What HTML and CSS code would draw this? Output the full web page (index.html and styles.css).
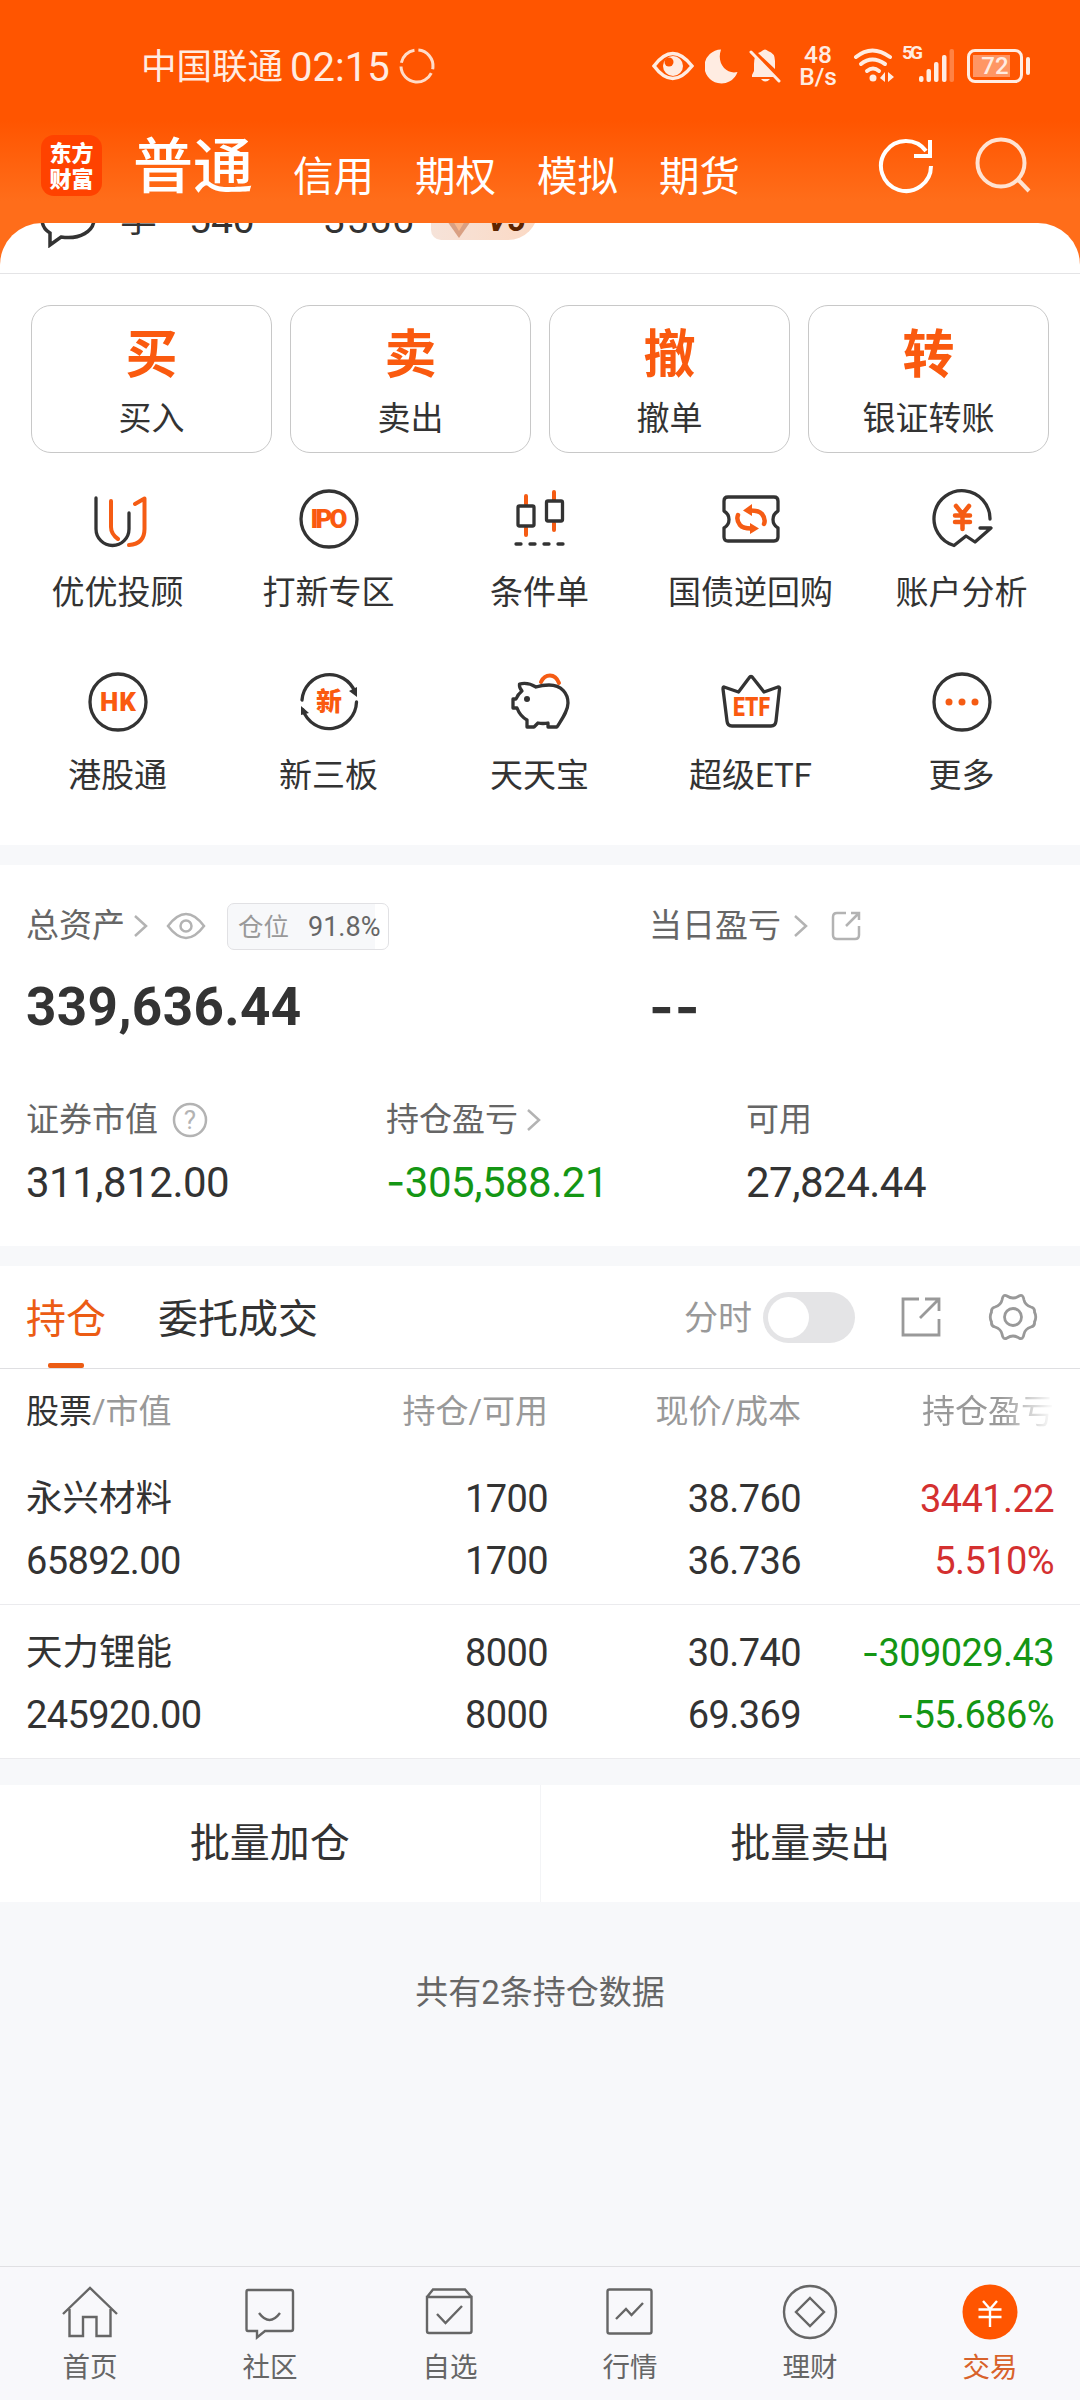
FILE: index.html
```html
<!DOCTYPE html>
<html lang="zh-CN">

<head>
    <meta charset="UTF-8">
    <meta name="viewport" content="width=device-width, initial-scale=1.0">
    <title>交易</title>
    <link rel="stylesheet" href="styles.css">
</head>

<body>

    <header class="header">
        <div class="status">
            <span class="carrier">中国联通</span>
            <span class="clock">02:15</span>
            <svg class="ring" width="38" height="38" viewBox="0 0 38 38">
                <circle cx="19" cy="19" r="16" pathLength="100" stroke-dasharray="27 4 42 4 19 4" transform="rotate(-85 19 19)" />
            </svg>
            <div class="status-right">
                <svg width="42" height="36" viewBox="0 0 42 36">
                    <path d="M2 18Q20.500-7 40 18Q20.500 43 2 18z" fill="none" stroke="#ffece2" stroke-width="3.500" />
                    <circle cx="21" cy="18" r="10" />
                    <circle cx="17" cy="14" r="4.500" fill="#ff5500" />
                </svg>
                <svg class="moon" width="34" height="36" viewBox="0 0 34 36">
                    <path d="M16 1.500A17 17 0 1 0 32.500 24C22 27 11 16 16 1.500z" />
                </svg>
                <svg class="bell" width="36" height="36" viewBox="0 0 36 36">
                    <path d="M5 27V29H28L8 9Q7 12 7 16V23z" />
                    <path d="M11 5Q14 4 15 3Q18 0 21 3Q28 5 28 13V21z" />
                    <path d="M14 31h9q-4.500 5-9 0z" />
                    <path d="M4 4L32 33" stroke="#ffece2" stroke-width="3" stroke-linecap="round" />
                </svg>
                <div class="speed"><span>48</span><span>B/s</span></div>
                <svg class="wifi" width="44" height="38" viewBox="0 0 44 38">
                    <g fill="none" stroke="#ffece2" stroke-width="4" stroke-linecap="round">
                        <path d="M4 10Q20-3 38 10" />
                        <path d="M9 17Q20 8 33 17" />
                        <path d="M15 24Q21 19 27 24" />
                    </g>
                    <circle cx="21" cy="31" r="3.500" />
                    <path d="M28 31L33 25V35zM36 25V35L42 30z" />
                </svg>
                <span class="net">5G</span>
                <svg class="signal" width="36" height="38" viewBox="0 0 36 38">
                    <rect x="0" y="29" width="4.500" height="6" rx="2" />
                    <rect x="7.500" y="22" width="4.500" height="13" rx="2" />
                    <rect x="15" y="15" width="4.500" height="20" rx="2" />
                    <rect x="23" y="8" width="4.500" height="27" rx="2" />
                    <rect x="30.500" y="2" width="4.500" height="33" rx="2" opacity=".3" />
                </svg>
                <div class="battery"><span>72</span></div>
                <i class="nub"></i>
            </div>
        </div>

        <div class="titlebar">
            <div class="logo">东方<br>财富</div>
            <h1>普通</h1>
            <nav class="accounts">
                <a>信用</a>
                <a>期权</a>
                <a>模拟</a>
                <a>期货</a>
            </nav>
            <svg class="refresh" width="60" height="60" viewBox="0 0 60 60">
                <path d="M55 31A25 25 0 1 1 50 16" />
                <path d="M54 5V21H38" />
            </svg>
            <svg class="search" width="60" height="60" viewBox="0 0 60 60">
                <circle cx="28" cy="28" r="23.500" />
                <path d="M44.500 44L56 56" />
            </svg>
        </div>
    </header>

    <div class="sheet">
        <div class="profile">
            <svg width="56" height="50" viewBox="0 0 56 50">
                <path d="M28 4C12 4 2 12 2 21C2 28 5 32 10 35V47L21 39C40 42 54 33 54 21C54 12 44 4 28 4z" />
            </svg>
            <span class="surname">李</span>
            <span class="no1">540</span>
            <span class="no2">3566</span>
            <div class="level">
                <svg width="28" height="26" viewBox="0 0 28 26">
                    <path d="M2 8L26 8L14 25z" fill="#d9a083" />
                    <path d="M8 8H20L14 18z" fill="#f7b88e" />
                </svg>
                <b>V5</b>
            </div>
        </div>

        <section class="quick">
            <div class="trade">
                <div class="card"><b>买</b><span>买入</span></div>
                <div class="card"><b>卖</b><span>卖出</span></div>
                <div class="card"><b>撤</b><span>撤单</span></div>
                <div class="card"><b>转</b><span>银证转账</span></div>
            </div>

            <div class="menu">
                <div class="item">
                    <svg class="ico" viewBox="0 0 64 64">
                        <path d="M10 11V42a16.500 16.500 0 0 0 33 0V26" />
                        <path class="o" d="M25 14V40q0 7 7 12M49 17L58.500 11.500V42q0 15-15.500 16" />
                    </svg>
                    <span>优优投顾</span>
                </div>
                <div class="item">
                    <svg class="ico" viewBox="0 0 64 64">
                        <circle cx="32" cy="32" r="28" />
                        <text x="32" y="41" textLength="37">IPO</text>
                    </svg>
                    <span>打新专区</span>
                </div>
                <div class="item">
                    <svg class="ico" viewBox="0 0 64 64">
                        <path class="o" d="M18 9V17M18 41V48M46 5V13M46 36V43" />
                        <rect x="10" y="19" width="16" height="20" rx="1.500" />
                        <rect x="38.500" y="14" width="16" height="20" rx="1.500" />
                        <path d="M8 57h5M22 57h5M36 57h5M50 57h5" />
                    </svg>
                    <span>条件单</span>
                </div>
                <div class="item">
                    <svg class="ico" viewBox="0 0 64 64">
                        <path d="M9 10H55Q59 10 59 14V24Q54 27 54 32.500T59 41V50Q59 54 55 54H9Q5 54 5 50V41Q10 38 10 32.500T5 24V14Q5 10 9 10z" />
                        <path class="o arr" d="M19 28Q17 33 21 38Q24 41.500 32 41.500M45 37Q47 32 43 27Q40 23.500 32 23.500" />
                        <path class="dot" d="M24 23.500L33 17V29zM40 41.500L31 36V47z" />
                    </svg>
                    <span>国债逆回购</span>
                </div>
                <div class="item">
                    <svg class="ico" viewBox="0 0 64 64">
                        <path d="M60 32A28 28 0 1 0 24 58.500L36 49L45 55L61 41H50" />
                        <path class="o arr" d="M26 19L32.500 27L39 19M32.500 27V42M25 28.500H40M25 35H40" />
                    </svg>
                    <span>账户分析</span>
                </div>
                <div class="item">
                    <svg class="ico" viewBox="0 0 64 64">
                        <circle cx="32" cy="32" r="28" />
                        <text x="32" y="41" textLength="36">HK</text>
                    </svg>
                    <span>港股通</span>
                </div>
                <div class="item">
                    <svg class="ico" viewBox="0 0 64 64">
                        <path d="M5 30A27.500 27.500 0 0 1 58 22M59.500 32A27.500 27.500 0 0 1 6 40" />
                        <path class="tip" d="M52 21L60 17V27zM4 36L12 43L4 45z" />
                        <text x="32" y="41" textLength="26">新</text>
                    </svg>
                    <span>新三板</span>
                </div>
                <div class="item">
                    <svg class="ico" viewBox="0 0 64 64">
                        <path class="o" d="M33 12Q36 5.500 42 5.500T51 13" />
                        <path d="M11.500 14Q20 12 28 17Q34 15 41 15C54 15 60 24 60 33C60 41 54 49 49 57H40V53Q35 54 30 53L26 57H19V50Q12 46 9 38H5V29H8Q10 24 14 21Q11 18 11.500 14z" />
                        <circle class="eye" cx="19" cy="29" r="3" />
                    </svg>
                    <span>天天宝</span>
                </div>
                <div class="item">
                    <svg class="ico" viewBox="0 0 64 64">
                        <path d="M5 17L19.500 22L30 8Q32 5 34 8L45 22L59 17Q61 17 60.500 19L57 51Q56.500 56 52 56H13Q8.500 56 8 51L4 19Q4 17 5 17z" />
                        <text x="32.500" y="46" textLength="37" lengthAdjust="spacingAndGlyphs">ETF</text>
                    </svg>
                    <span>超级ETF</span>
                </div>
                <div class="item">
                    <svg class="ico" viewBox="0 0 64 64">
                        <circle cx="32" cy="32" r="28" />
                        <g class="dot">
                            <circle cx="19" cy="32" r="3.500" />
                            <circle cx="32" cy="32" r="3.500" />
                            <circle cx="45" cy="32" r="3.500" />
                        </g>
                    </svg>
                    <span>更多</span>
                </div>
            </div>
        </section>
    </div>

    <section class="assets">
        <div class="totals">
            <div class="total">
                <div class="label">
                    总资产
                    <svg class="line chev" width="16" height="24" viewBox="0 0 16 24"><path d="M2 2L13 12L2 22" /></svg>
                    <svg class="line watch" width="40" height="30" viewBox="0 0 40 30">
                        <path d="M2 15Q20-9 38 15Q20 39 2 15z" />
                        <circle cx="20" cy="15" r="5.500" />
                    </svg>
                    <span class="ratio"><em>仓位</em>91.8%</span>
                </div>
                <div class="big">339,636.44</div>
            </div>
            <div class="today">
                <div class="label">
                    当日盈亏
                    <svg class="line chev wide" width="16" height="24" viewBox="0 0 16 24"><path d="M2 2L13 12L2 22" /></svg>
                    <svg class="line export" width="32" height="32" viewBox="0 0 32 32">
                        <path d="M16 3H7Q3 3 3 7V25Q3 29 7 29H25Q29 29 29 25V16M21 3H29V10M28 4L16 16" />
                    </svg>
                </div>
                <div class="big dash">--</div>
            </div>
        </div>
        <div class="details">
            <div>
                <div class="label">
                    证券市值
                    <svg class="line help" width="36" height="36" viewBox="0 0 36 36">
                        <circle cx="18" cy="18" r="16" />
                        <text x="18" y="27">?</text>
                    </svg>
                </div>
                <div class="num">311,812.00</div>
            </div>
            <div>
                <div class="label">
                    持仓盈亏
                    <svg class="line chev" width="16" height="24" viewBox="0 0 16 24"><path d="M2 2L13 12L2 22" /></svg>
                </div>
                <div class="num green"><i>-</i>305,588.21</div>
            </div>
            <div>
                <div class="label">可用</div>
                <div class="num">27,824.44</div>
            </div>
        </div>
    </section>

    <section class="positions">
        <div class="tabs">
            <a class="tab active">持仓</a>
            <a class="tab">委托成交</a>
            <div class="tools">
                <span>分时</span>
                <div class="switch"></div>
                <svg class="out" width="42" height="42" viewBox="0 0 42 42">
                    <path d="M19 3H3V39H39V23M25 3H39V15M38 4L20 22" />
                </svg>
                <svg class="gear" width="50" height="50" viewBox="0 0 50 50">
                    <path d="M14 8Q15 1.500 19 4Q25 8 31 4Q35 1.500 36 8Q37 13 43 15Q47 16 46.500 20Q49 25 46.500 30Q47 34 43 35Q37 37 36 42Q35 48.500 31 46Q25 42 19 46Q15 48.500 14 42Q13 37 7 35Q3 34 3.500 30Q1 25 3.500 20Q3 16 7 15Q13 13 14 8z" />
                    <circle cx="25" cy="25" r="8.500" />
                </svg>
            </div>
        </div>

        <div class="row head">
            <div><b>股票</b>/市值</div>
            <div>持仓/可用</div>
            <div>现价/成本</div>
            <div class="fade">持仓盈亏</div>
        </div>
        <div class="row">
            <div><p class="name">永兴材料</p><p>65892.00</p></div>
            <div><p>1700</p><p>1700</p></div>
            <div><p>38.760</p><p>36.736</p></div>
            <div class="red"><p>3441.22</p><p>5.510%</p></div>
        </div>
        <div class="row">
            <div><p class="name">天力锂能</p><p>245920.00</p></div>
            <div><p>8000</p><p>8000</p></div>
            <div><p>30.740</p><p>69.369</p></div>
            <div class="green"><p><i>-</i>309029.43</p><p><i>-</i>55.686%</p></div>
        </div>
    </section>

    <div class="batch">
        <a>批量加仓</a>
        <a>批量卖出</a>
    </div>

    <p class="summary">共有2条持仓数据</p>

    <footer class="tabbar">
        <a>
            <svg viewBox="0 0 64 64"><path d="M5 34L32 8L59 34M11.500 29V56H25V37H38.500V56H52.500V29" /></svg>
            首页
        </a>
        <a>
            <svg viewBox="0 0 64 64"><path d="M10 10H53Q55 10 55 12V49Q55 51 53 51H27L19 57.500V51H10Q8.500 51 8.500 49V12Q8.500 10 10 10zM21 33Q31.500 47 42 33" /></svg>
            社区
        </a>
        <a>
            <svg viewBox="0 0 64 64"><path d="M9 17H53.500V51Q53.500 53 51.500 53H11Q9 53 9 51zL15 9.500H47L53.500 17M19 34L27.500 43L44 26" /></svg>
            自选
        </a>
        <a>
            <svg viewBox="0 0 64 64">
                <rect x="9.500" y="9.500" width="44" height="44" rx="2" />
                <path d="M18 39L28 29L33.500 35L45 23" />
            </svg>
            行情
        </a>
        <a>
            <svg viewBox="0 0 64 64">
                <circle cx="32" cy="32" r="26" />
                <path d="M32 18L46 32L32 46L18 32z" />
            </svg>
            理财
        </a>
        <a class="on">
            <svg viewBox="0 0 64 64">
                <circle cx="32" cy="32" r="27.500" />
                <path d="M25 21L32 29L39 21M32 29V47M20.500 29.500H43.500M20.500 37H43.500" />
            </svg>
            交易
        </a>
    </footer>

</body>

</html>
```
FILE: styles.css
```css
* {
    box-sizing: border-box;
}

body {
    margin: 0;
    min-height: 2400px;
    display: flex;
    flex-direction: column;
    background: #f7f8fa;
    color: #333;
    font-family: Roboto, "Noto Sans CJK SC", sans-serif;
    font-size: 33px;
    font-weight: 400;
}

p,
h1 {
    margin: 0;
}

svg {
    flex: none;
    fill: none;
}

/* header */

.header {
    height: 223px;
    background: linear-gradient(#ff5500 54%, #ff6d1a 90%);
    color: #fff;
}

.status {
    height: 130px;
    padding: 2px 50px 0 141px;
    display: flex;
    align-items: center;
    color: #ffece2;
    line-height: 40px;
}

.carrier {
    padding-top: 2px;
    font-size: 35.5px;
}

.clock {
    margin-left: 7px;
    padding-top: 3px;
    font-size: 40px;
}

.ring {
    margin-left: 8px;
    stroke: #ffdcc8;
    stroke-width: 3;
}

.status-right {
    margin-left: auto;
    display: flex;
    align-items: center;
}

.status-right svg {
    fill: #ffece2;
}

.moon {
    margin-left: 11px;
}

.bell {
    margin-left: 8px;
}

.speed {
    width: 40px;
    margin-left: 15px;
    display: flex;
    flex-direction: column;
    align-items: center;
    font-size: 24.5px;
    font-weight: 500;
    line-height: 22px;
}

.wifi {
    margin-left: 14px;
}

.net {
    width: 17px;
    margin: 0 0 26px 6px;
    font-size: 19px;
    font-weight: 700;
    line-height: 18px;
    letter-spacing: -3px;
}

.signal {
    margin-left: 0;
}

.battery {
    width: 56px;
    height: 34px;
    margin-left: 12px;
    border: 3px solid #ffece2;
    border-radius: 8px;
    background: linear-gradient(90deg, #ff9664 37px, transparent 37px) 3px 3px / 44px 22px no-repeat;
    font-size: 24px;
    font-weight: 500;
    line-height: 29px;
    text-align: center;
}

.nub {
    width: 4px;
    height: 18px;
    margin-left: 3px;
    border-radius: 2px;
    background: #ffece2;
}

.titlebar {
    height: 70px;
    padding: 0 49px 0 41px;
    display: flex;
    align-items: center;
}

.logo {
    width: 61px;
    height: 61px;
    border-radius: 13px;
    background: #ff4200;
    font-family: "Noto Sans CJK SC", sans-serif;
    font-size: 22px;
    font-weight: 900;
    line-height: 26px;
    text-align: center;
    padding-top: 3px;
}

.titlebar h1 {
    margin-left: 31px;
    padding-top: 5px;
    font-size: 60px;
    font-weight: 500;
    line-height: 70px;
}

.accounts {
    margin: 23px auto 0 40px;
    display: flex;
    gap: 41px;
    font-size: 40.5px;
    line-height: 50px;
}

.refresh {
    margin-right: 37px;
    stroke: #fff;
    stroke-width: 4;
}

.search {
    stroke: #ffe3d2;
    stroke-width: 4;
    margin-right: -2px;
}

/* account strip, scrolled half under the header */

.sheet {
    background: #ff6d1a;
}

.profile {
    height: 51px;
    padding: 0 40px;
    display: flex;
    align-items: flex-start;
    overflow: hidden;
    border-bottom: 1px solid #e4e4e6;
    border-radius: 42px 42px 0 0;
    background: #fff;
    font-size: 39px;
    line-height: 44px;
}

.profile svg {
    margin-top: -25px;
    stroke: #333;
    stroke-width: 3.5;
}

.profile span {
    margin-top: -25px;
}

.surname {
    margin-left: 24px;
    font-size: 37px;
}

.no1 {
    margin-left: 32px;
}

.no2 {
    margin-left: 69px;
    letter-spacing: 0.8px;
}

.level {
    height: 40px;
    width: 107px;
    margin: -23px 0 0 16px;
    padding-left: 14px;
    display: flex;
    border-radius: 10px 0 30px 10px;
    background: linear-gradient(90deg, #f6e3d9, #fbd9c4);
    color: #5c2400;
    font-size: 33px;
    font-style: italic;
    line-height: 40px;
}

.level svg {
    margin: 13px 14px 0 0;
    stroke: none;
}

/* shortcuts */

.quick {
    height: 571px;
    padding-top: 31px;
    background: #fff;
}

.trade {
    padding: 0 31px;
    display: grid;
    grid-template-columns: repeat(4, 1fr);
    gap: 18px;
}

.card {
    height: 148px;
    padding-top: 20px;
    display: flex;
    flex-direction: column;
    align-items: center;
    border: 1px solid #c8c8c8;
    border-radius: 20px;
}

.card b {
    color: #fa5a0f;
    font-size: 52px;
    font-weight: 700;
    line-height: 60px;
}

.card span {
    margin-top: 13px;
    line-height: 40px;
}

.menu {
    margin: 34px 13px 0 12px;
    display: grid;
    grid-template-columns: repeat(5, 1fr);
    row-gap: 57px;
}

.item {
    display: flex;
    flex-direction: column;
    align-items: center;
    gap: 22px;
    line-height: 40px;
    white-space: nowrap;
}

.ico {
    width: 64px;
    height: 64px;
    stroke: #333;
    stroke-width: 3.3;
    stroke-linecap: round;
    stroke-linejoin: round;
}

.ico .o {
    stroke: #f55c14;
    stroke-width: 4;
}

.ico .arr {
    stroke-width: 4.5;
}

.ico .dot {
    fill: #f55c14;
    stroke: none;
}

.ico .tip,
.ico .eye {
    fill: #333;
    stroke: none;
}

.ico text {
    fill: #fa5a0f;
    stroke: none;
    font-size: 26px;
    font-weight: 900;
    text-anchor: middle;
}

/* assets */

.assets {
    height: 381px;
    margin-top: 20px;
    padding: 38px 0 0 26px;
    background: #fff;
}

.totals {
    display: flex;
}

.total {
    width: 623px;
}

.label {
    height: 46px;
    display: flex;
    align-items: center;
    color: #666;
    line-height: 46px;
}

.line {
    stroke: #b3b3b3;
    stroke-width: 2.5;
}

.chev {
    margin-left: 8px;
}

.chev.wide {
    margin-left: 12px;
}

.watch {
    margin-left: 17px;
}

.ratio {
    width: 162px;
    height: 47px;
    margin-left: 21px;
    padding-left: 10px;
    border: 1px solid #e1e1e4;
    border-radius: 7px;
    background: linear-gradient(90deg, #f7f8fa 91.8%, #fff 91.8%);
    font-size: 27px;
    line-height: 46px;
    white-space: nowrap;
}

.ratio em {
    margin-right: 19px;
    color: #999;
    font-size: 25.5px;
    font-style: normal;
}

.export {
    margin-left: 21px;
}

.help {
    margin-left: 14px;
}

.help text {
    fill: #b3b3b3;
    stroke: none;
    font-size: 26px;
    text-anchor: middle;
}

.big {
    margin-top: 28px;
    font-size: 53px;
    font-weight: 700;
    line-height: 60px;
    letter-spacing: 0.4px;
}

.dash {
    font-family: Inter, sans-serif;
    letter-spacing: 1px;
}

.details {
    margin-top: 60px;
    display: flex;
}

.details > div {
    flex: none;
    width: 360px;
}

.details > div:last-child {
    width: 300px;
}

.num {
    margin-top: 15px;
    font-size: 42px;
    line-height: 50px;
    letter-spacing: -0.5px;
}

.num i,
.row i {
    font-family: Inter, sans-serif;
    font-style: normal;
    line-height: 1;
}

.green {
    color: #149614;
}

.red {
    color: #d43030;
}

/* positions */

.positions {
    margin-top: 20px;
    background: #fff;
}

.tabs {
    height: 103px;
    padding: 0 42px 0 26px;
    display: flex;
    border-bottom: 1px solid #dfdfe2;
    font-size: 40px;
    line-height: 108px;
}

.tab {
    height: 102px;
    margin-right: 52px;
}

.active {
    display: flex;
    flex-direction: column;
    align-items: center;
    justify-content: space-between;
    color: #ec5c14;
}

.active::after {
    content: "";
    width: 36px;
    height: 5px;
    margin-top: -12px;
    border-radius: 2px;
    background: #ec5c14;
}

.tools {
    height: 102px;
    margin-left: auto;
    display: flex;
    align-items: center;
    color: #999;
    font-size: 34px;
}

.tools span {
    line-height: 50px;
    padding-top: 2px;
}

.switch {
    width: 92px;
    height: 51px;
    margin-left: 11px;
    padding: 5px;
    border-radius: 26px;
    background: #e4e4e6;
}

.switch::before {
    content: "";
    display: block;
    width: 41px;
    height: 41px;
    border-radius: 50%;
    background: #fff;
}

.out,
.gear {
    stroke: #999;
    stroke-width: 2.8;
}

.out {
    margin-left: 45px;
}

.gear {
    margin-left: 46px;
}

.row {
    height: 154px;
    padding: 23px 26px 0 26px;
    display: grid;
    grid-template-columns: 269px 253px 253px 1fr;
    border-bottom: 1px solid #ebebee;
    font-size: 38px;
    line-height: 50px;
    letter-spacing: -0.6px;
    text-align: right;
}

.row > div:first-child {
    text-align: left;
}

.row p {
    height: 50px;
}

.row p + p {
    margin-top: 12px;
}

.row .name {
    font-size: 36.5px;
    letter-spacing: 0;
}

.head {
    height: 82px;
    padding-top: 18px;
    border: none;
    color: #999;
    font-size: 33px;
    letter-spacing: 0;
}

.head b {
    color: #333;
    font-weight: 400;
}

.fade {
    -webkit-mask-image: linear-gradient(90deg, #000 200px, transparent 253px);
    mask-image: linear-gradient(90deg, #000 200px, transparent 253px);
}

.batch {
    height: 117px;
    margin-top: 26px;
    display: flex;
    align-items: center;
    background: #fff;
    font-size: 40px;
    line-height: 117px;
    text-align: center;
}

.batch a {
    flex: 1;
}

.batch a + a {
    border-left: 1px solid #f3f4f6;
}

.summary {
    margin-top: 66px;
    color: #666;
    line-height: 50px;
    text-align: center;
}

/* bottom bar */

.tabbar {
    height: 134px;
    margin-top: auto;
    padding-top: 13px;
    display: flex;
    border-top: 1px solid #e0e0e3;
    background: #f8f8fb;
    color: #666;
    font-size: 27.5px;
    line-height: 40px;
}

.tabbar a {
    flex: 1;
    display: flex;
    flex-direction: column;
    align-items: center;
}

.tabbar svg {
    width: 64px;
    height: 64px;
    margin-bottom: 4px;
    stroke: #666;
    stroke-width: 2.4;
}

.tabbar .on {
    color: #d8622a;
}

.on svg {
    stroke: #fff;
}

.on circle {
    fill: #ff5500;
    stroke: none;
}
```
